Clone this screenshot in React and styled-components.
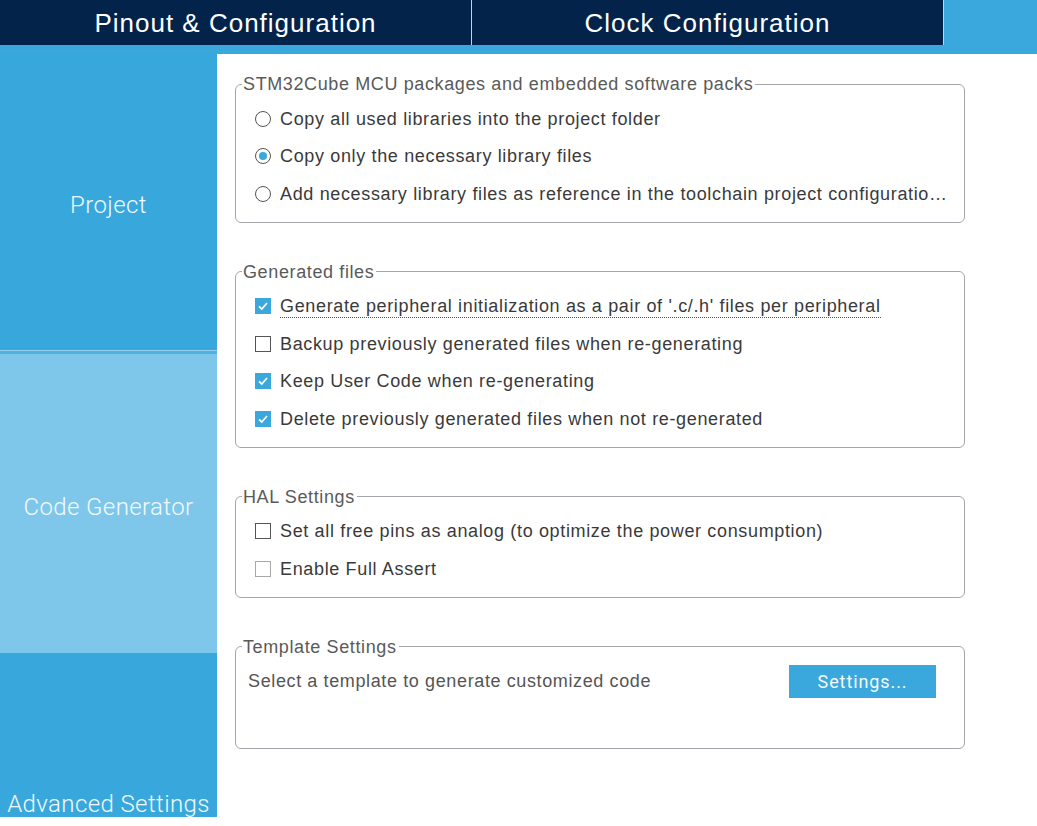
import React from "react";
import styled, { createGlobalStyle } from "styled-components";

const Global = createGlobalStyle`
  html, body { margin: 0; padding: 0; background: #fff; }
  body { font-family: "Liberation Sans", Arial, sans-serif; }
  * { box-sizing: border-box; }
`;

const Page = styled.div`
  width: 1037px;
  height: 826px;
  display: flex;
  flex-direction: column;
  overflow: hidden;
  background: #fff;
`;

const TopBar = styled.div`
  display: flex;
  height: 45px;
  background: #3aa8dc;
`;

const Tab = styled.div`
  width: ${(p) => p.$w}px;
  background: #03234b;
  color: #fff;
  font-family: "Liberation Sans", Arial, sans-serif;
  font-size: 26px;
  letter-spacing: 1px;
  display: flex;
  align-items: center;
  justify-content: center;
  padding-top: 2px;
  border-right: 1px solid #c9d3df;
`;

const Strip = styled.div`
  height: 9px;
  background: #3aa8dc;
`;

const Body = styled.div`
  display: flex;
  flex: 1;
  min-height: 0;
`;

const Sidebar = styled.div`
  width: 217px;
  display: flex;
  flex-direction: column;
  height: 764px;
`;

const NavItem = styled.div`
  height: ${(p) => p.$h}px;
  background: ${(p) => (p.$active ? "#7fc7ea" : "#38a8dc")};
  color: #f2f9fd;
  font-family: Roboto, "Liberation Sans", sans-serif;
  font-weight: 300;
  font-size: 24px;
  letter-spacing: 0.4px;
  display: flex;
  justify-content: center;
  align-items: ${(p) => (p.$bottom ? "flex-end" : "center")};
  padding-top: ${(p) => (p.$bottom ? 0 : 6)}px;
  border-top: ${(p) => (p.$sep ? "3px solid #4db2e0" : "none")};
  border-bottom: ${(p) => (p.$line ? "1px solid #8fd0ef" : "none")};
  white-space: nowrap;
  line-height: 26px;
`;

const Content = styled.div`
  flex: 1;
  padding: 20px 0 0 18px;
  display: flex;
  flex-direction: column;
  gap: 39px;
`;

const Group = styled.fieldset`
  width: 730px;
  margin: 0;
  padding: 6px 15px 9px 19px;
  border: 1px solid #a3a7ab;
  border-radius: 6px;
  min-height: ${(p) => p.$minH || 0}px;
  min-width: 0;
`;

const Legend = styled.legend`
  font-family: "Liberation Sans", Arial, sans-serif;
  font-size: 18px;
  letter-spacing: 0.62px;
  line-height: 20px;
  color: #5a5a5a;
  padding: 0 2px 0 1px;
  margin-left: -13px;
`;

const Row = styled.label`
  display: flex;
  align-items: center;
  gap: 9px;
  height: 37.5px;
  font-family: "Liberation Sans", Arial, sans-serif;
  font-size: 18px;
  letter-spacing: 0.65px;
  color: #3a3a3a;
  min-width: 0;
`;

const RowText = styled.span`
  white-space: nowrap;
  overflow: hidden;
  text-overflow: ellipsis;
  min-width: 0;
  padding-bottom: 1px;
  border-bottom: ${(p) => (p.$dotted ? "1px dotted #555" : "1px solid transparent")};
  line-height: 20px;
  margin-top: 2px;
`;

const Radio = styled.span`
  flex: none;
  width: 16px;
  height: 16px;
  border-radius: 50%;
  border: 1px solid #555;
  background: #fff;
  display: flex;
  align-items: center;
  justify-content: center;
  &::after {
    content: "";
    width: 8px;
    height: 8px;
    border-radius: 50%;
    background: ${(p) => (p.$on ? "#3aa8dc" : "transparent")};
  }
`;

const Box = styled.span`
  flex: none;
  width: 16px;
  height: 16px;
  border: 1px solid ${(p) => (p.$on ? "#3aa8dc" : p.$dim ? "#a8a8a8" : "#555")};
  background: ${(p) => (p.$on ? "#3aa8dc" : "#fff")};
  display: flex;
  align-items: center;
  justify-content: center;
`;

const TemplateRow = styled.div`
  display: flex;
  align-items: center;
  justify-content: space-between;
  height: 38px;
  margin-left: -7px;
  padding-right: 13px;
  font-family: "Liberation Sans", Arial, sans-serif;
  font-size: 18px;
  letter-spacing: 0.62px;
  color: #555;
`;

const Button = styled.button`
  width: 147px;
  height: 33px;
  border: none;
  background: #3aa8dc;
  color: #f4fbff;
  font-family: Roboto, "Liberation Sans", sans-serif;
  font-size: 18px;
  letter-spacing: 0.9px;
  padding: 0;
  cursor: pointer;
`;

function Check({ on, dim }) {
  return (
    <Box $on={on} $dim={dim}>
      {on && (
        <svg width="12" height="12" viewBox="0 0 12 12">
          <path d="M2 6.3 L4.8 9 L10 3" fill="none" stroke="#fff" strokeWidth="1.8" />
        </svg>
      )}
    </Box>
  );
}

export default function App() {
  return (
    <Page>
      <Global />
      <TopBar>
        <Tab $w={472}>Pinout &amp; Configuration</Tab>
        <Tab $w={472}>Clock Configuration</Tab>
      </TopBar>
      <Strip />
      <Body>
        <Sidebar>
          <NavItem $h={297} $line>Project</NavItem>
          <NavItem $h={302} $active $sep>Code Generator</NavItem>
          <NavItem $h={164} $bottom>Advanced Settings</NavItem>
        </Sidebar>
        <Content>
          <Group>
            <Legend>STM32Cube MCU packages and embedded software packs</Legend>
            <Row><Radio /><RowText>Copy all used libraries into the project folder</RowText></Row>
            <Row><Radio $on /><RowText>Copy only the necessary library files</RowText></Row>
            <Row><Radio /><RowText>Add necessary library files as reference in the toolchain project configuration file</RowText></Row>
          </Group>
          <Group>
            <Legend>Generated files</Legend>
            <Row><Check on /><RowText $dotted>Generate peripheral initialization as a pair of '.c/.h' files per peripheral</RowText></Row>
            <Row><Check /><RowText>Backup previously generated files when re-generating</RowText></Row>
            <Row><Check on /><RowText>Keep User Code when re-generating</RowText></Row>
            <Row><Check on /><RowText>Delete previously generated files when not re-generated</RowText></Row>
          </Group>
          <Group>
            <Legend>HAL Settings</Legend>
            <Row><Check /><RowText>Set all free pins as analog (to optimize the power consumption)</RowText></Row>
            <Row><Check dim /><RowText>Enable Full Assert</RowText></Row>
          </Group>
          <Group $minH={112}>
            <Legend>Template Settings</Legend>
            <TemplateRow>
              <span>Select a template to generate customized code</span>
              <Button>Settings...</Button>
            </TemplateRow>
          </Group>
        </Content>
      </Body>
    </Page>
  );
}
